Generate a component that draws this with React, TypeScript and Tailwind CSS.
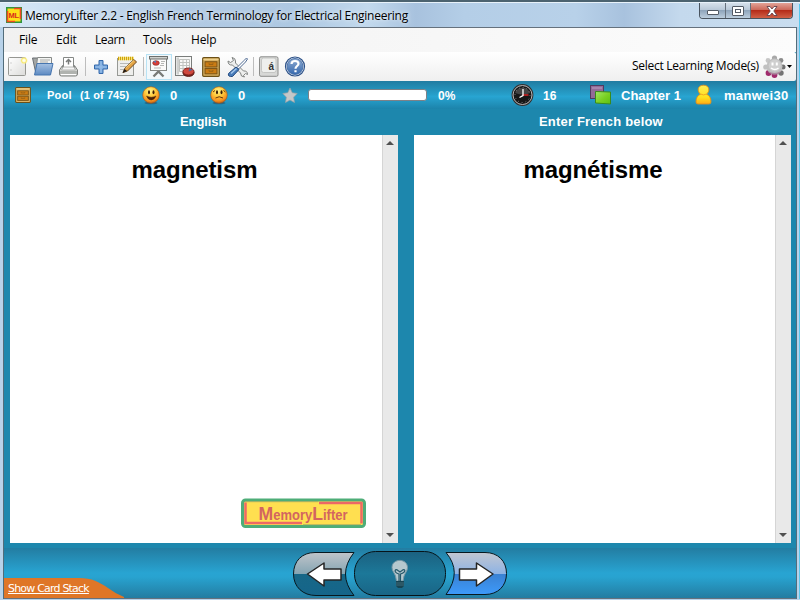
import React from "react";

const ui = "font-['Open_Sans','Noto_Sans',sans-serif]";
const bold = "font-['Liberation_Sans',Arial,sans-serif] font-bold text-white whitespace-nowrap";

function Cell({ w, children, className = "" }: { w: string; children?: React.ReactNode; className?: string }) {
  return <div className={`${w} ${className} shrink-0 flex items-center h-full whitespace-nowrap`}>{children}</div>;
}

function AppIcon() {
  return (
    <svg width="16" height="16" viewBox="0 0 16 16" className="shrink-0">
      <rect width="16" height="16" fill="#2f9440" />
      <rect x="1.500" y="1.500" width="13" height="13" fill="#ffdf18" />
      <path d="M1.500 4v10.500H9M8 1.500h6.500V12" fill="none" stroke="#f04a22" strokeWidth="1.600" />
      <text x="2.600" y="10.600" fontSize="7.500" fontWeight="bold" fontFamily="Liberation Sans" fill="#d92b1c" textLength="10.500">ML</text>
    </svg>
  );
}

function NewIcon() {
  return (
    <svg width="22" height="22" viewBox="0 0 22 22">
      <defs>
        <linearGradient id="pg" x1="0" y1="0" x2="1" y2="1"><stop stopColor="#fff" /><stop offset="1" stopColor="#dcdcda" /></linearGradient>
        <radialGradient id="glow"><stop stopColor="#fff" /><stop offset=".35" stopColor="#fffbd0" /><stop offset=".6" stopColor="#f6e66a" /><stop offset="1" stopColor="#fff6a0" stopOpacity="0" /></radialGradient>
      </defs>
      <rect x=".5" y="1.500" width="17" height="18" rx="1" fill="url(#pg)" stroke="#969792" />
      <path d="M3 6.500v1M3 13.500v1" stroke="#aaa" />
      <circle cx="16" cy="4.500" r="4" fill="url(#glow)" />
    </svg>
  );
}

function FolderIcon() {
  return (
    <svg width="23" height="22" viewBox="0 0 23 22">
      <defs><linearGradient id="fo" x1="0" y1="0" x2="0" y2="1"><stop stopColor="#a5c1e2" /><stop offset="1" stopColor="#5d8ac2" /></linearGradient></defs>
      <path d="M.5 2h5l1 2h12v14H4z" fill="#a3a6a5" stroke="#6a6f73" />
      <path d="M4 14L5.500 1.500h14V12z" fill="#f3f4f2" stroke="#878a88" />
      <path d="M8 4h10M8 6h8" stroke="#a8aaa8" />
      <path d="M5 7.500h16L18.500 19h-16z" fill="url(#fo)" stroke="#4776b0" />
    </svg>
  );
}

function PrintIcon() {
  return (
    <svg width="22" height="22" viewBox="0 0 22 22">
      <path d="M5.500 1.500h10V13h-10z" fill="#fff" stroke="#858886" />
      <path d="M10.500 3.500v5M8 6l2.500-2.500L13 6" fill="none" stroke="#777a79" strokeWidth="1.500" />
      <path d="M4.500 9.500L1.500 14v4q0 2 2 2h14q2 0 2-2v-4l-3-4.500v3.500h-12z" fill="#d5d7d4" stroke="#808380" />
      <path d="M5 11h11l1.500 3h-14z" fill="#f5f5f5" stroke="#a5a7a5" strokeWidth=".8" />
      <path d="M2 15h17v3H2z" fill="#b0b3af" /><path d="M3 18.500h15" stroke="#fff" />
    </svg>
  );
}

function PlusIcon() {
  return <svg width="16" height="16" viewBox="0 0 16 16"><path d="M6 1.500h4V6h4.500v4H10v4.500H6V10H1.500V6H6z" fill="#7aaade" stroke="#3569ab" /><path d="M8 2.500v11M2.500 8h11" stroke="#9cc0e9" /></svg>;
}

function NotepadIcon() {
  return (
    <svg width="22" height="22" viewBox="0 0 22 22">
      <rect x="1.500" y="2.500" width="16" height="17" fill="#eeeeec" stroke="#979995" />
      <path d="M4 7.500h9M4 10.500h8M4 13.500h5" stroke="#b8b9b7" />
      <path d="M2 2.500h16" stroke="#fff3a0" strokeWidth="3.500" />
      <path d="M2 2.500h16" stroke="#cfa30a" strokeWidth="3.500" strokeDasharray="1.200 .8" />
      <path d="M7 16.500l2-4.500L18 3.500l2.500 2.500L11.500 15z" fill="#e4a445" stroke="#6d4a20" />
      <path d="M9.500 12L18 4.500" stroke="#f9d480" /><path d="M6.500 17l2-4 2.500 2z" fill="#211b17" />
    </svg>
  );
}

function BoardIcon() {
  return (
    <svg width="22" height="23" viewBox="0 0 22 23">
      <path d="M10.500 15v3M5.500 21.500l5-5 5 5" stroke="#777a78" strokeWidth="2.300" fill="none" />
      <rect x="2.500" y="3.500" width="16" height="12" fill="#fbfbfa" stroke="#858886" />
      <rect x="1.500" y="1.500" width="18" height="2.500" fill="#cfd1ce" stroke="#6c6f6d" />
      <ellipse cx="8" cy="8" rx="3.300" ry="2.300" fill="#d8403b" stroke="#87241f" strokeWidth=".6" /><path d="M8 8L5 6.500 8 5.700z" fill="#557bb5" />
      <path d="M13 6.500h4M13 8.500h3M12 10.500h4M6 13h7" stroke="#b5b7b5" />
    </svg>
  );
}

function ReportIcon() {
  return (
    <svg width="22" height="22" viewBox="0 0 22 22">
      <rect x="1.500" y=".5" width="16" height="19" fill="#f8f8f7" stroke="#7a7d7b" />
      <path d="M2.500 1.500v17H5v-17z" fill="#cfd0ce" />
      <path d="M5.500 3.500h10v12h-10zM5.500 6.500h10M5.500 9.500h10M5.500 12.500h10M9 3.500v12M12.500 3.500v12" fill="none" stroke="#c0c2bf" />
      <path d="M9 16v1c0 4.500 11 4.500 11 0v-1z" fill="#77231e" stroke="#5c1b16" />
      <ellipse cx="14.500" cy="15.500" rx="5.500" ry="3.500" fill="#d0483e" stroke="#80221b" /><path d="M14.500 15.500l1-3.300 3.500 1.600z" fill="#4f6a9c" />
    </svg>
  );
}

function Drawer({ small = false }: { small?: boolean }) {
  return (
    <svg width={small ? 16 : 18} height={small ? 16 : 20} viewBox="0 0 18 19" preserveAspectRatio="none">
      <rect x=".7" y=".7" width="16.600" height="17.600" rx="1" fill="#dbb365" stroke="#6b5017" strokeWidth="1.200" />
      <path d="M1.500 2.300h15" stroke="#ecd08c" strokeWidth="1.300" />
      <rect x="3" y="4.500" width="12" height="5" fill="#cb7c14" stroke="#7a5315" /><rect x="3" y="11" width="12" height="5" fill="#cb7c14" stroke="#7a5315" />
      <path d="M7 6v1h4V6M7 12.500v1h4v-1" fill="none" stroke="#8a5c16" strokeWidth=".8" />
    </svg>
  );
}

function ToolsIcon() {
  return (
    <svg width="22" height="22" viewBox="0 0 22 22">
      <path d="M5 1.500q3.500.5 3.500 3.500v2l8 8q4-.5 4 3.500l-2-1-2 2 1 1.500q-4 0-4-4l-8-8q-4.500.5-4.500-4l2.500 1.500 3-2z" fill="#edeeed" stroke="#818482" />
      <path d="M19.500 2l1 1-2 3-7 7-1.500-1.500 7-7z" fill="#fff" stroke="#506b93" />
      <path d="M1.500 17.500L9 11l3 2.500-6.500 7q-5 .5-4-3z" fill="#477bb9" stroke="#244b80" /><path d="M4 17.500l5.500-5" stroke="#a6c8ec" strokeWidth="1.500" />
    </svg>
  );
}

function KeyIcon() {
  return (
    <svg width="22" height="22" viewBox="0 0 22 22">
      <rect x="1.500" y=".8" width="18.500" height="19.500" rx="1.500" fill="#d7d8d6" stroke="#8b8c8a" />
      <rect x="3.500" y="2" width="14.500" height="14.500" rx="2" fill="#eeefed" stroke="#c4c5c3" />
      <text x="10.500" y="14" fontSize="10" fontWeight="bold" fontFamily="Liberation Sans" fill="#333">á</text>
    </svg>
  );
}

function HelpIcon() {
  return (
    <svg width="22" height="22" viewBox="0 0 22 22">
      <defs><linearGradient id="hg" x1="0" y1="0" x2="0" y2="1"><stop stopColor="#91acd1" /><stop offset="1" stopColor="#3468ae" /></linearGradient></defs>
      <circle cx="11" cy="10.500" r="9.500" fill="#fff" stroke="#2d5289" strokeWidth="1.200" /><circle cx="11" cy="10.500" r="8" fill="url(#hg)" stroke="#4a72a9" />
      <path d="M7.500 8q.2-3 3.500-3 3.500 0 3.500 2.700c0 2.200-3 2.500-3 5M11.500 14.300v2" fill="none" stroke="#fff" strokeWidth="2.200" />
    </svg>
  );
}

function GearIcon() {
  return (
    <svg width="23" height="23" viewBox="0 0 23 23">
      <g fill="#a9a9a9"><circle cx="11.500" cy="3" r="2.600" /><circle cx="5" cy="5.500" r="2.400" fill="#c6c6c6" /><circle cx="2.800" cy="12" r="2.600" fill="#c0c0c0" /><circle cx="18" cy="5.500" r="2.400" fill="#8d8d8d" /><circle cx="20" cy="12" r="2.500" fill="#707070" /><circle cx="18" cy="18" r="2.700" fill="#737373" /></g>
      <circle cx="5.500" cy="18" r="2.900" fill="#a02a6c" /><circle cx="11.500" cy="20" r="2.900" fill="#a02a6c" />
      <circle cx="11.500" cy="11.500" r="8" fill="#c0c0c0" /><path d="M5 16q6.500 4 13 0-2 4-6.500 4T5 16z" fill="#9d5f83" opacity=".6" />
      <circle cx="11.800" cy="10.500" r="6" fill="#cfcfcf" />
      <path d="M9.500 7.500v3M13.800 7.500v3" stroke="#fff" strokeWidth="2" /><path d="M8 13q4 3 7.500 0" fill="none" stroke="#fff" strokeWidth="1.500" />
    </svg>
  );
}

function Face({ sad = false }: { sad?: boolean }) {
  return (
    <svg width="20" height="20" viewBox="0 0 20 20">
      <defs><radialGradient id="fg" cx=".45" cy=".25" r=".8"><stop stopColor="#fff38a" /><stop offset=".4" stopColor="#ffcb3c" /><stop offset=".75" stopColor="#f59220" /><stop offset="1" stopColor="#b04d0c" /></radialGradient></defs>
      <ellipse cx="10" cy="18" rx="6.500" ry="1.300" fill="#246a87" />
      <circle cx="10" cy="10" r="8.300" fill="url(#fg)" stroke="#a65312" strokeWidth=".6" />
      <ellipse cx="8" cy="7.300" rx="1" ry="2" fill="#3a1b05" /><ellipse cx="12.500" cy="7.300" rx="1" ry="2" fill="#3a1b05" />
      {sad
        ? <path d="M6.500 13q3.700-2.500 7.500 0M4 7l2-1.500M14.500 5.500l2 1.500" fill="none" stroke="#5c2904" strokeWidth=".9" />
        : <path d="M5.500 11q1.500 4 4.700 4t4.800-4q-4.700 2.500-9.500 0z" fill="#4a2208" stroke="#4a2208" strokeWidth=".4" />}
    </svg>
  );
}

function ClockIcon() {
  return (
    <svg width="23" height="23" viewBox="0 0 23 23">
      <circle cx="11.500" cy="11" r="10" fill="#171717" stroke="#322f2e" strokeWidth="1.800" /><circle cx="11.500" cy="11" r="9.500" fill="none" stroke="#b5b5b7" strokeWidth="1" />
      <path d="M4 9a8 8 0 0115 0q-6 3-15 0z" fill="#444" /><circle cx="11.500" cy="11" r="7.500" fill="none" stroke="#aaa" strokeWidth="1" strokeDasharray=".7 3.230" />
      <path d="M11.500 11H17.500" stroke="#e52020" strokeWidth="1.400" /><path d="M12 5v6.500L8.500 13.500" fill="none" stroke="#fff" strokeWidth="1.300" />
    </svg>
  );
}

function CardsIcon() {
  return (
    <svg width="23" height="22" viewBox="0 0 23 22">
      <defs><linearGradient id="gr" x1="0" y1="0" x2="1" y2="1"><stop stopColor="#a2e766" /><stop offset=".55" stopColor="#79d022" /><stop offset="1" stopColor="#5cbf11" /></linearGradient></defs>
      <rect x="1.500" y="1.500" width="13" height="13" fill="#936b98" stroke="#513b60" /><path d="M3 4h10" stroke="#a784ac" strokeWidth="2" />
      <path d="M6.500 7.500l15 .5v12l-15-1z" fill="url(#gr)" stroke="#3a8a1c" />
    </svg>
  );
}

function UserIcon() {
  return (
    <svg width="18" height="22" viewBox="0 0 18 22">
      <defs><linearGradient id="us" x1="0" y1="0" x2="0" y2="1"><stop stopColor="#ffed55" /><stop offset=".65" stopColor="#ffe01e" /><stop offset="1" stopColor="#ffac14" /></linearGradient></defs>
      <path d="M8.500 1.200c6.500 0 6.500 6.500 3 9 3 1 4.500 4 4.500 7.800q0 2-2 2H3q-2 0-2-2c0-3.800 1.500-6.800 4.500-7.800-3.500-2.500-3.500-9 3-9z" fill="url(#us)" stroke="#e08f1c" strokeWidth=".9" />
      <path d="M5.500 10q3 1.800 6 0" stroke="#f5a91f" fill="none" />
    </svg>
  );
}

function Stats() {
  return (
    <div className="h-[28px] shrink-0 flex items-center bg-[linear-gradient(#217ca1,#27a0cb_50%,#28a5d2_55%,#1c83aa)]">
      <Cell w="w-[11px]" />
      <Cell w="w-[32px]"><Drawer small /></Cell>
      <Cell w="w-[33px]" className={`${bold} text-[11px] tracking-[0.2px]`}>Pool</Cell>
      <Cell w="w-[61px]" className={`${bold} text-[11px] tracking-[0.1px]`}>(1 of 745)</Cell>
      <Cell w="w-[29px]"><Face /></Cell>
      <Cell w="w-[39px]" className={`${bold} text-[13px] pt-px`}>0</Cell>
      <Cell w="w-[29px]"><Face sad /></Cell>
      <Cell w="w-[44px]" className={`${bold} text-[13px] pt-px`}>0</Cell>
      <Cell w="w-[26px]"><svg width="16" height="17" viewBox="0 0 16 17"><path d="M8 1l2.200 4.700 5 .8-3.600 3.700.9 5.300L8 13l-4.500 2.500.9-5.300L.8 6.500l5-.8z" fill="#c5c8c9" stroke="#9ba0a3" strokeWidth=".7" /></svg></Cell>
      <Cell w="w-[130px]"><div className="w-[119px] h-[12px] rounded-[3px] border border-[#7d8187] bg-white" /></Cell>
      <Cell w="w-[73px]" className={`${bold} text-[12px] pt-px`}>0%</Cell>
      <Cell w="w-[32px]"><ClockIcon /></Cell>
      <Cell w="w-[46px]" className={`${bold} text-[12px] pt-px`}>16</Cell>
      <Cell w="w-[32px]"><CardsIcon /></Cell>
      <Cell w="w-[74px]" className={`${bold} text-[13px] pt-px tracking-[0px]`}>Chapter 1</Cell>
      <Cell w="w-[29px]"><UserIcon /></Cell>
      <Cell w="w-[70px]" className={`${bold} text-[13px] pt-px tracking-[0.3px]`}>manwei30</Cell>
    </div>
  );
}

function Panel({ word, width, logo = false }: { word: string; width: string; logo?: boolean }) {
  return (
    <section className={`${width} h-[408px] flex bg-white shrink-0`}>
      <div className="flex-1 flex flex-col justify-between">
        <h1 className="pt-[19px] pr-[3px] text-center font-['Liberation_Sans',Arial,sans-serif] font-bold text-[24px] leading-[32px] tracking-[-0.1px] text-black">{word}</h1>
        {logo && (
          <div className="self-end mr-[16px] mb-[15px]">
            <svg width="125" height="30" viewBox="0 0 125 30" className="block">
              <rect x="1.500" y="2" width="122" height="26.500" rx="3" fill="#ffdf50" stroke="#4ead78" strokeWidth="3" />
              <path d="M4.500 4.500V25H61M78 5h42.500v20.500" fill="none" stroke="#ed6866" strokeWidth="2.500" />
              <path d="M4 3.700h73M62 26.700h58" stroke="#a1a764" strokeWidth=".8" />
              <text x="17.500" y="21.500" textLength="89" lengthAdjust="spacingAndGlyphs" fontFamily="Liberation Sans" fontWeight="bold" fontSize="14" fill="#d36560"><tspan fontSize="19">M</tspan>emory<tspan fontSize="19">L</tspan>ifter</text>
            </svg>
          </div>
        )}
      </div>
      <div className="w-[16px] bg-[#e9e9e9] border-l border-[#d5d5d5] flex flex-col items-start pl-[3px] justify-between py-[6px]">
        <svg width="8" height="4" viewBox="0 0 8 4"><path d="M0 4L4 0l4 4z" fill="#505050" /></svg>
        <svg width="8" height="4" viewBox="0 0 8 4"><path d="M0 0h8L4 4z" fill="#505050" /></svg>
      </div>
    </section>
  );
}

function NavButtons() {
  return (
    <svg width="216" height="47" viewBox="0 0 216 47" className="block">
      <defs>
        <linearGradient id="lb" x1="0" y1="0" x2="0" y2="1"><stop stopColor="#c0c5ca" /><stop offset=".5" stopColor="#84a4b2" /><stop offset=".51" stopColor="#176787" /><stop offset="1" stopColor="#15658a" /></linearGradient>
        <linearGradient id="mb" x1="0" y1="0" x2="0" y2="1"><stop stopColor="#1b6180" /><stop offset=".5" stopColor="#1c7899" /><stop offset="1" stopColor="#196586" /></linearGradient>
        <linearGradient id="rb" x1="0" y1="0" x2="0" y2="1"><stop stopColor="#c2c7d1" /><stop offset=".5" stopColor="#8eb3e4" /><stop offset=".51" stopColor="#3a81d2" /><stop offset="1" stopColor="#3d9afb" /></linearGradient>
      </defs>
      <path d="M62 2.500H23C10 2.500 1.500 11 1.500 24S11 45.500 24 45.500h38Q45 24 62 2.500z" fill="url(#lb)" stroke="#07181f" />
      <rect x="62.500" y="1.500" width="91" height="44" rx="21" fill="url(#mb)" stroke="#061419" />
      <path d="M154 2.500H193c13 0 21.500 8.500 21.500 21S206 44.500 193 44.500h-39Q170.500 22 154 2.500z" fill="url(#rb)" stroke="#07181f" />
      <path d="M15.500 24L32 13v6h17v11H32v6z" fill="#fff" stroke="#252525" strokeWidth="1.500" strokeLinejoin="round" />
      <path d="M201 24L184.500 13v6h-17v11h17v6z" fill="#fff" stroke="#252525" strokeWidth="1.500" strokeLinejoin="round" />
      <path d="M104.500 31l-1-5c-1-3-3.500-5-3.500-8.500 0-9.500 15.500-9.500 15.500 0 0 3.500-2.500 5.500-3.500 8.500l-1 5z" fill="#b5c8ce" stroke="#7798a5" />
      <path d="M107 31v-7c-6-2-4-6-1-3.500l2 1.500 2-1.500c3-2.500 5 1.500-1.500 3.500v7" fill="none" stroke="#25586a" strokeWidth="1.200" />
      <path d="M104 31h8v5l-2 2h-4l-2-2z" fill="#174452" /><path d="M104 33h8M104 35h8" stroke="#55808e" strokeWidth=".7" />
    </svg>
  );
}

export default function App() {
  return (
    <main className="w-[800px] h-[600px] overflow-hidden bg-[#b8d2e9] flex flex-col border-t-2 border-[#4c6370] relative">
      <header className="h-[25px] shrink-0 flex items-start bg-[linear-gradient(90deg,#d8e9f7,#b2cae4_22%,#adc8e2_37%,#c2d9ed_46%,#a8c2de_52%,#b4cee7_58%,#b8d1e9_72%,#a8c2de_78%,#c4d9ed_85%,#c9ddef)] border-t border-[#e8f2fa]">
        <div className="w-[699px] h-full flex items-center pl-[6px] gap-[3px]">
          <AppIcon />
          <span className={`${ui} text-[12px] tracking-[-0.26px] pt-[2px] text-black whitespace-nowrap [text-shadow:0_0_4px_white]`}>MemoryLifter 2.2 - English French Terminology for Electrical Engineering</span>
        </div>
        <div className="h-[16px] w-[94px] flex rounded-b-[4px] overflow-hidden border border-t-0 border-[#49545f]">
          <div className="w-[25px] flex items-center justify-center bg-[linear-gradient(#d6e1eb,#b7c7d7_48%,#8fa5bb_50%,#bccedd)]"><div className="w-[12px] h-[5px] mt-[3px] bg-white border border-[#535b65] rounded-[1px]" /></div>
          <div className="w-[26px] border-x border-[#66717d] flex items-center justify-center bg-[linear-gradient(#d6e1eb,#b7c7d7_48%,#8fa5bb_50%,#bccedd)]"><div className="w-[12px] h-[10px] bg-white border border-[#535b65] rounded-[1px] flex items-center justify-center"><div className="w-[6px] h-[4px] border border-[#535b65]" /></div></div>
          <div className="flex-1 flex items-center justify-center bg-[linear-gradient(#e3a397,#ca6657_47%,#b52c19_50%,#d06046)]"><svg width="12" height="10" viewBox="0 0 12 10"><path d="M1 .5h3l2 2.500L8 .5h3L7.800 5 11 9.500H8L6 7 4 9.500H1L4.200 5z" fill="#fff" stroke="#63414a" strokeWidth=".9" /></svg></div>
        </div>
      </header>
      <div className="h-[572px] mx-[3px] border-x border-[#526d7b] bg-[#1d87ad] flex flex-col">
        <nav className={`h-[25px] shrink-0 border-t border-[#65717d] bg-[linear-gradient(90deg,#f1f1f1,#fcfcfc)] flex items-center ${ui} text-[12px] text-black tracking-[-0.15px]`}>
          <Cell w="w-[15px]" /><Cell w="w-[37px]">File</Cell><Cell w="w-[39px]">Edit</Cell><Cell w="w-[48px]" className="tracking-[-0.4px]">Learn</Cell><Cell w="w-[48px]">Tools</Cell><Cell w="w-[40px]">Help</Cell>
        </nav>
        <div className="h-[29px] shrink-0 flex items-center bg-[linear-gradient(#fff,#efefef)] rounded-r-[2px]">
          <Cell w="w-[28px]" className="pl-[4px]"><NewIcon /></Cell>
          <Cell w="w-[26px]"><FolderIcon /></Cell>
          <Cell w="w-[27px]"><PrintIcon /></Cell>
          <Cell w="w-[8px]"><div className="h-[19px] w-px bg-[#bdbdbd]" /></Cell>
          <Cell w="w-[23px]"><PlusIcon /></Cell>
          <Cell w="w-[27px]"><NotepadIcon /></Cell>
          <Cell w="w-[3px]"><div className="h-[19px] w-px bg-[#bdbdbd]" /></Cell>
          <Cell w="w-[28px]"><div className="w-[26px] h-[26px] border border-[#b8e2f4] bg-[#f2f8fb] flex items-center justify-center"><BoardIcon /></div></Cell>
          <Cell w="w-[28px]"><ReportIcon /></Cell>
          <Cell w="w-[25px]"><Drawer /></Cell>
          <Cell w="w-[26px]"><ToolsIcon /></Cell>
          <Cell w="w-[5px]"><div className="h-[19px] w-px bg-[#bdbdbd]" /></Cell>
          <Cell w="w-[26px]"><KeyIcon /></Cell>
          <Cell w="w-[348px]"><HelpIcon /></Cell>
          <Cell w="w-[131px]" className={`${ui} text-[12px] text-black tracking-[-0.27px] pb-px`}>Select Learning Mode(s)</Cell>
          <Cell w="w-[24px]"><GearIcon /></Cell>
          <svg width="5" height="3" viewBox="0 0 5 3"><path d="M0 0h5L2.500 3z" /></svg>
        </div>
        <Stats />
        <div className={`h-[26px] shrink-0 flex items-center ${bold} text-[13px] leading-none pb-[2px]`}>
          <div className="w-[176px]" /><div className="w-[359px] tracking-[-0.1px]">English</div><div className="tracking-[0.18px]">Enter French below</div>
        </div>
        <div className="flex pl-[6px] gap-[16px] shrink-0"><Panel word="magnetism" width="w-[388px]" logo /><Panel word="magnétisme" width="w-[377px]" /></div>
        <footer className="h-[50px] mt-[5px] shrink-0 flex items-end bg-[linear-gradient(#237da2,#28a4d2_50%,#28a3d0_58%,#237ca1)]">
          <div className="w-[288px] h-[21px] shrink-0 grid">
            <svg width="124" height="21" viewBox="0 0 124 21" className="col-start-1 row-start-1"><path d="M0 1h75c13 0 20 4 29 10q8 6 16 9v1H0z" fill="#df7627" /></svg>
            <span className="col-start-1 row-start-1 pl-[4px] pt-[5px] font-['DejaVu_Sans','Noto_Sans',sans-serif] text-[11px] leading-[14px] tracking-[-0.8px] text-white underline">Show Card Stack</span>
          </div>
          <div className="mb-px"><NavButtons /></div>
        </footer>
        <div className="h-px bg-[#66717d]" />
      </div>
      <div className="absolute right-0 top-[2px] w-px h-[595px] bg-[#58c8ed]" />
    </main>
  );
}
